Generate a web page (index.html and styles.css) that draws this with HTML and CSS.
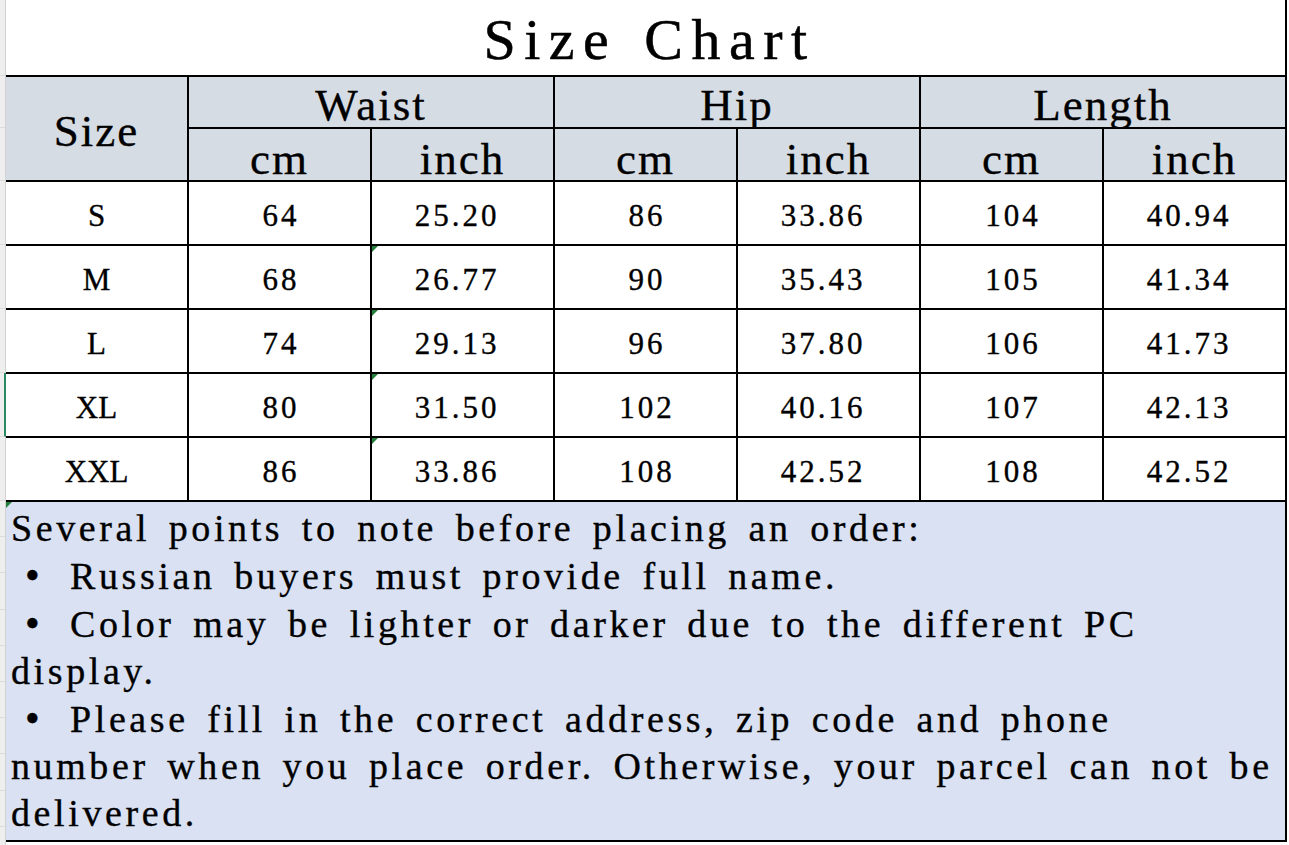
FILE: index.html
```html
<!DOCTYPE html>
<html lang="en">
<head>
<meta charset="utf-8">
<title>Size Chart</title>
<link rel="stylesheet" href="styles.css">
</head>
<body>
<div class="sheet">
  <div class="gutter">
    <div class="g g-title"></div>
    <div class="g g-h1"></div>
    <div class="g g-h2"></div>
    <div class="g g-row"></div>
    <div class="g g-row"></div>
    <div class="g g-row"></div>
    <div class="g g-row sel"></div>
    <div class="g g-row"></div>
    <div class="g g-n"></div>
    <div class="g g-n"></div>
    <div class="g g-n2"></div>
    <div class="g g-n"></div>
    <div class="g g-n"></div>
    <div class="g g-n"></div>
    <div class="g g-n"></div>
    <div class="g g-n2"></div>
    <div class="g g-n"></div>
    <div class="g g-rest"></div>
  </div>

  <div class="chart">
    <div class="title">Size Chart</div>

    <div class="hd hsize">Size</div>
    <div class="hd hd1 span2">Waist</div>
    <div class="hd hd1 span2">Hip</div>
    <div class="hd hd1 span2">Length</div>
    <div class="hd hd2">cm</div>
    <div class="hd hd2">inch</div>
    <div class="hd hd2">cm</div>
    <div class="hd hd2">inch</div>
    <div class="hd hd2">cm</div>
    <div class="hd hd2">inch</div>

    <div class="cell sz">S</div>
    <div class="cell num">64</div>
    <div class="cell num inch">25.20</div>
    <div class="cell num">86</div>
    <div class="cell num inch">33.86</div>
    <div class="cell num">104</div>
    <div class="cell num inch">40.94</div>

    <div class="cell sz">M</div>
    <div class="cell num">68</div>
    <div class="cell num inch flag">26.77</div>
    <div class="cell num">90</div>
    <div class="cell num inch">35.43</div>
    <div class="cell num">105</div>
    <div class="cell num inch">41.34</div>

    <div class="cell sz">L</div>
    <div class="cell num">74</div>
    <div class="cell num inch flag">29.13</div>
    <div class="cell num">96</div>
    <div class="cell num inch">37.80</div>
    <div class="cell num">106</div>
    <div class="cell num inch">41.73</div>

    <div class="cell sz">XL</div>
    <div class="cell num">80</div>
    <div class="cell num inch flag">31.50</div>
    <div class="cell num">102</div>
    <div class="cell num inch">40.16</div>
    <div class="cell num">107</div>
    <div class="cell num inch">42.13</div>

    <div class="cell sz">XXL</div>
    <div class="cell num">86</div>
    <div class="cell num inch flag">33.86</div>
    <div class="cell num">108</div>
    <div class="cell num inch">42.52</div>
    <div class="cell num">108</div>
    <div class="cell num inch">42.52</div>

    <div class="notes flag">
      <p>Several points to note before placing an order:</p>
      <p><span class="bullet">•</span>Russian buyers must provide full name.</p>
      <p><span class="bullet">•</span>Color may be lighter or darker due to the different PC<br>display.</p>
      <p><span class="bullet">•</span>Please fill in the correct address, zip code and phone<br>number when you place order. Otherwise, your parcel can not be<br>delivered.</p>
    </div>
  </div>
</div>
</body>
</html>
```

FILE: styles.css
```css
* {
  box-sizing: border-box;
}

html, body {
  margin: 0;
  padding: 0;
  background: #ffffff;
}

body {
  width: 1289px;
  height: 845px;
  overflow: hidden;
  font-family: "Liberation Serif", "Times New Roman", serif;
  color: #000;
}

.sheet {
  display: flex;
  align-items: flex-start;
}

/* spreadsheet row-header strip on the left */
.gutter {
  width: 6px;
  display: flex;
  flex-direction: column;
  flex: none;
}

.g {
  width: 6px;
  background: #eeeeee;
  border-right: 1px solid #d2d2d2;
  border-bottom: 1px solid #dcdcdc;
}

.g-title { height: 76px; }
.g-h1 { height: 52px; }
.g-h2 { height: 53px; }
.g-row { height: 64px; }
.g-n { height: 36px; }
.g-n2 { height: 37px; }
.g-rest { height: 18px; border-bottom: none; }

.g.sel {
  border-right: 2px solid #2c8a62;
}

/* main chart */
.chart {
  display: grid;
  grid-template-columns: repeat(7, 181px);
  grid-template-rows: 75px 50px 51px repeat(5, 62px) 338px;
  gap: 2px;
  padding: 0 2px 2px 0;
  background: #000;
  flex: none;
  -webkit-text-stroke: 0.35px #000;
}

.chart > div {
  text-align: center;
  white-space: nowrap;
}

.title {
  grid-column: 1 / -1;
  background: #fff;
  font-size: 58px;
  line-height: 64px;
  padding-top: 8px;
  padding-left: 8px;
  letter-spacing: 8.5px;
  word-spacing: 4px;
  -webkit-text-stroke: 0.5px #000;
}

.hd {
  background: #d6dce4;
  font-size: 45px;
  line-height: 40px;
  letter-spacing: 2px;
}

.hsize {
  grid-row: span 2;
  padding-top: 34px;
}

.span2 {
  grid-column: span 2;
}

.hd1 {
  padding-top: 8px;
}

.hd2 {
  padding-top: 10px;
}

.cell {
  background: #fff;
  font-size: 31px;
  line-height: 34px;
  padding-top: 17px;
}

.num {
  letter-spacing: 3px;
  padding-left: 3px;
}

.inch {
  padding-right: 14px;
}

.flag {
  position: relative;
}

.flag::before {
  content: "";
  position: absolute;
  left: 0;
  top: 0;
  border-top: 6px solid #23803a;
  border-right: 6px solid transparent;
}

.notes {
  grid-column: 1 / -1;
  background: #d9e1f2;
  text-align: left !important;
  font-size: 38px;
  line-height: 47px;
  padding: 3px 0 0 5px;
  letter-spacing: 3.6px;
  word-spacing: 5.5px;
}

.notes p {
  margin: 0;
}

.bullet {
  display: inline-block;
  width: 59px;
  padding-left: 14px;
  font-size: 42px;
  letter-spacing: 0;
}
```
